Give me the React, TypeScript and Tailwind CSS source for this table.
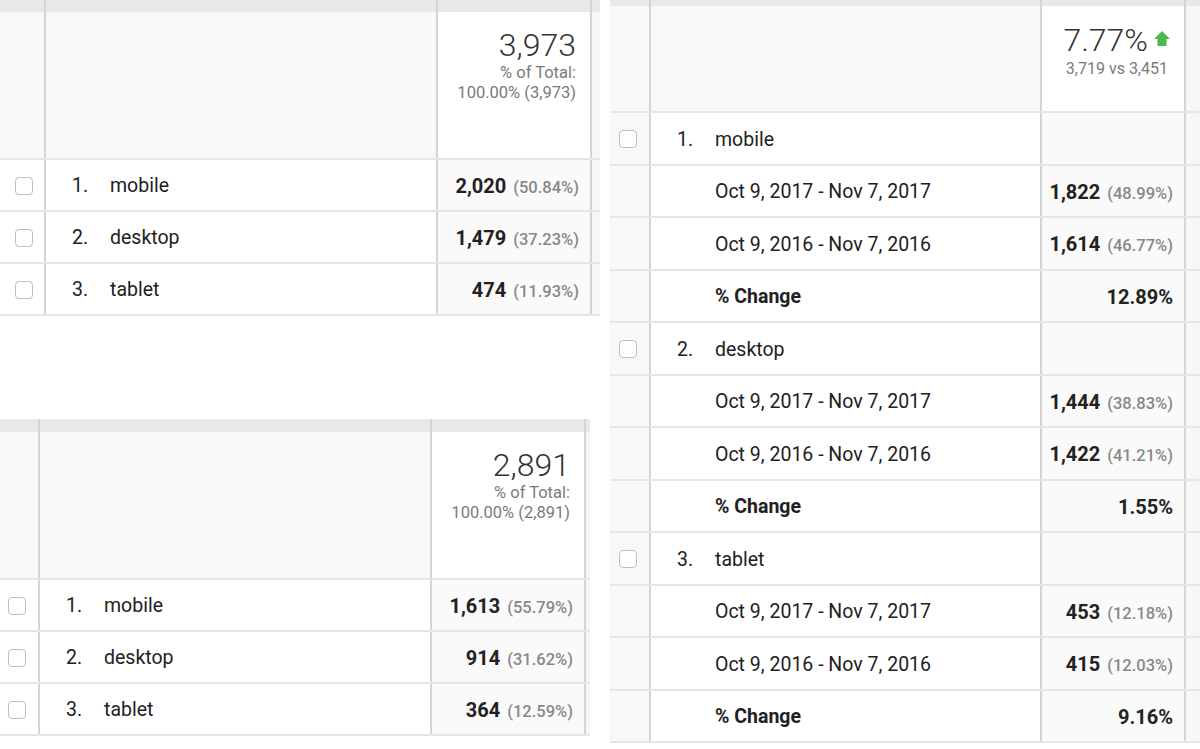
import React from 'react';

type Row =
  | { type: 'item'; n: number; label: string; value?: string; pct?: string }
  | { type: 'date'; label: string; value: string; pct: string }
  | { type: 'change'; value: string };

interface PanelProps {
  cols: [string, string, string, string];
  strip: string;
  header: string;
  rowH: string;
  checkPad: string;
  checkBg: string;
  total: React.ReactNode;
  rows: Row[];
}

const Checkbox = () => (
  <span className="block h-[18px] w-[18px] rounded-[4px] border border-[#bdbdbd] bg-white" />
);

const Value = ({ value, pct }: { value: string; pct?: string }) => (
  <span className="flex items-baseline">
    <span className="text-[20px] font-bold text-[#222]">{value}</span>
    {pct && <span className="ml-[7px] text-[16.5px] font-medium text-[#888]">{pct}</span>}
  </span>
);

const Panel = ({ cols, strip, header, rowH, checkPad, checkBg, total, rows }: PanelProps) => {
  const [c0, c1, c2, c3] = cols;
  const line = 'border-r-2 border-[#d4d4d4]';

  return (
    <div className="flex flex-col">
      <div className={`flex ${strip} bg-[#e8e8e8]`}>
        <div className={`${c0} ${line}`} />
        <div className={`${c1} ${line}`} />
        <div className={`${c2} ${line}`} />
        <div className={c3} />
      </div>

      <div className={`flex ${header} border-b-2 border-[#e6e6e6]`}>
        <div className={`${c0} ${line} bg-[#f8f8f8]`} />
        <div className={`${c1} ${line} bg-[#f8f8f8]`} />
        <div className={`${c2} ${line} bg-white`}>{total}</div>
        <div className={`${c3} bg-[#f6f6f6]`} />
      </div>

      {rows.map((row, i) => (
        <div key={i} className={`flex ${rowH} border-b-2 border-[#e6e6e6]`}>
          <div className={`${c0} ${line} ${checkBg} flex items-center pt-[2px] ${checkPad}`}>
            {row.type === 'item' && <Checkbox />}
          </div>
          <div className={`${c1} ${line} bg-white flex items-center pt-[2px] text-[19.5px] text-[#212121]`}>
            {row.type === 'item' && (
              <>
                <span className="ml-[26px] w-[38px]">{row.n}.</span>
                <span>{row.label}</span>
              </>
            )}
            {row.type === 'date' && <span className="ml-[64px]">{row.label}</span>}
            {row.type === 'change' && <span className="ml-[64px] font-bold">% Change</span>}
          </div>
          <div className={`${c2} ${line} bg-[#fafafa] flex items-center justify-end pt-[2px] pr-[11px]`}>
            {row.type !== 'change' && row.value && <Value value={row.value} pct={row.pct} />}
            {row.type === 'change' && <Value value={row.value} />}
          </div>
          <div className={`${c3} bg-[#f7f7f7]`} />
        </div>
      ))}
    </div>
  );
};

const Total = ({ big, a, b }: { big: string; a: string; b: string }) => (
  <div className="flex flex-col items-end pt-[17px] pr-[14px]">
    <div className="text-[32px] leading-[32px] font-light text-[#333]">{big}</div>
    <div className="mt-[2px] text-[16.5px] leading-[20px] text-[#7a7a7a]">{a}</div>
    <div className="text-[16.5px] leading-[20px] text-[#7a7a7a]">{b}</div>
  </div>
);

const Change = () => (
  <div className="flex flex-col items-end pt-[18px] pr-[14px]">
    <div className="flex items-end">
      <span className="text-[32px] leading-[32px] font-light text-[#333]">7.77%</span>
      <svg width="16" height="15" viewBox="0 0 16 15" className="ml-[6px] mb-[10px]">
        <polygon points="8,0 16,8 12.5,8 12.5,15 3.5,15 3.5,8 0,8" fill="#4cb84c" />
      </svg>
    </div>
    <div className="mt-[3px] mr-[2px] text-[16px] leading-[20px] text-[#7a7a7a]">3,719 vs 3,451</div>
  </div>
);

const devicesA: Row[] = [
  { type: 'item', n: 1, label: 'mobile', value: '2,020', pct: '(50.84%)' },
  { type: 'item', n: 2, label: 'desktop', value: '1,479', pct: '(37.23%)' },
  { type: 'item', n: 3, label: 'tablet', value: '474', pct: '(11.93%)' },
];

const devicesB: Row[] = [
  { type: 'item', n: 1, label: 'mobile', value: '1,613', pct: '(55.79%)' },
  { type: 'item', n: 2, label: 'desktop', value: '914', pct: '(31.62%)' },
  { type: 'item', n: 3, label: 'tablet', value: '364', pct: '(12.59%)' },
];

const cur = 'Oct 9, 2017 - Nov 7, 2017';
const prev = 'Oct 9, 2016 - Nov 7, 2016';

const compare: Row[] = [
  { type: 'item', n: 1, label: 'mobile' },
  { type: 'date', label: cur, value: '1,822', pct: '(48.99%)' },
  { type: 'date', label: prev, value: '1,614', pct: '(46.77%)' },
  { type: 'change', value: '12.89%' },
  { type: 'item', n: 2, label: 'desktop' },
  { type: 'date', label: cur, value: '1,444', pct: '(38.83%)' },
  { type: 'date', label: prev, value: '1,422', pct: '(41.21%)' },
  { type: 'change', value: '1.55%' },
  { type: 'item', n: 3, label: 'tablet' },
  { type: 'date', label: cur, value: '453', pct: '(12.18%)' },
  { type: 'date', label: prev, value: '415', pct: '(12.03%)' },
  { type: 'change', value: '9.16%' },
];

export default function App() {
  return (
    <div className="flex h-[749px] w-[1200px] overflow-hidden bg-white font-[Roboto,sans-serif]">
      <div className="flex w-[600px] flex-col">
        <Panel
          cols={['w-[46px]', 'w-[392px]', 'w-[154px]', 'w-[8px]']}
          strip="h-[12px]"
          header="h-[148px]"
          rowH="h-[52px]"
          checkPad="pl-[15px]"
          checkBg="bg-white"
          total={<Total big="3,973" a="% of Total:" b="100.00% (3,973)" />}
          rows={devicesA}
        />
        <div className="mt-[103px] w-[590px]">
          <Panel
            cols={['w-[40px]', 'w-[392px]', 'w-[154px]', 'w-[4px]']}
            strip="h-[13px]"
            header="h-[148px]"
            rowH="h-[52px]"
            checkPad="pl-[8px]"
            checkBg="bg-white"
            total={<Total big="2,891" a="% of Total:" b="100.00% (2,891)" />}
            rows={devicesB}
          />
        </div>
      </div>
      <div className="ml-[10px] w-[590px]">
        <Panel
          cols={['w-[41px]', 'w-[391px]', 'w-[144px]', 'w-[14px]']}
          strip="h-[6px]"
          header="h-[107px]"
          rowH="h-[52.5px]"
          checkPad="pl-[9px]"
          checkBg="bg-[#f8f8f8]"
          total={<Change />}
          rows={compare}
        />
      </div>
    </div>
  );
}
